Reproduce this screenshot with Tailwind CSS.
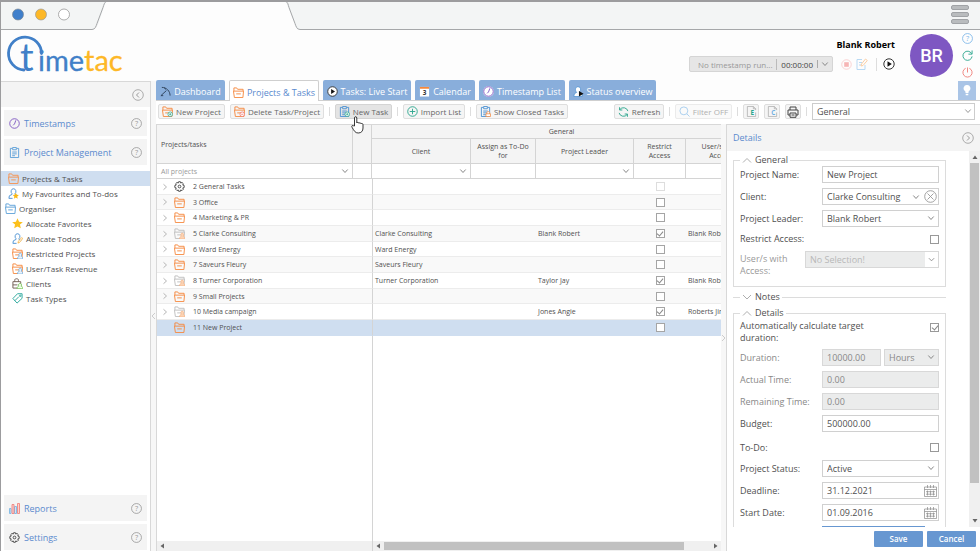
<!DOCTYPE html>
<html lang="en">
<head>
<meta charset="utf-8">
<title>TimeTac – Projects &amp; Tasks</title>
<script src="https://cdn.jsdelivr.net/npm/@tailwindcss/browser@4"></script>
</head>
<body class="h-screen overflow-hidden bg-[#fdfdfd] font-['Open_Sans',sans-serif] text-[8px] leading-[11px] text-[#666]">

<svg class="hidden" aria-hidden="true">
  <symbol id="folder" viewBox="0 0 12 12"><g fill="none" stroke="currentColor" stroke-width="1"><path d="M1 4.500V1h3l1 1.500h6v2M.5 4.500h11L10.800 11.500H1.500zM3.500 7.500h5"/></g></symbol>
  <symbol id="clip" viewBox="0 0 12 12"><g fill="none" stroke="currentColor"><path d="M3.500 1.500h-2v10h9v-10h-2" /><path d="M4 .5h4v2.500H4zM3.500 5.500h5M3.500 7.500h5M3.500 9.500h3"/></g></symbol>
  <symbol id="clock" viewBox="0 0 12 12"><g fill="none" stroke="currentColor"><circle cx="6" cy="6" r="5.200"/><path d="M7.500 2.500 6 6.500 4.500 8"/></g></symbol>
  <symbol id="help" viewBox="0 0 12 12"><circle cx="6" cy="6" r="5.400" fill="none" stroke="currentColor" stroke-width=".9"/><text x="6" y="8.800" font-size="8" text-anchor="middle" fill="currentColor">?</text></symbol>
  <symbol id="gear" viewBox="0 0 12 12"><g fill="none" stroke="currentColor"><path d="M5 .8h2l.4 1.500 1.300-.8 1.600 1.600-.8 1.300 1.600.5v2.200l-1.600.5.8 1.300-1.600 1.600-1.300-.8L7 11.200H5l-.4-1.500-1.300.8-1.600-1.600.8-1.300L.9 7.100V4.900l1.600-.5-.8-1.300 1.600-1.600 1.300.8z"/><circle cx="6" cy="6" r="1.500"/></g></symbol>
  <symbol id="person" viewBox="0 0 12 12"><g fill="none" stroke="currentColor"><path d="M6 .8a2.600 3 0 0 1 1.600 5.400V7L10 8.200M6 .8a2.600 3 0 0 0-1.600 5.400V7L1.500 8.500 1 11.300h4"/></g></symbol>
  <symbol id="star" viewBox="0 0 12 12"><path fill="currentColor" d="m6 .3 1.700 3.800 4.100.4-3.100 2.700.9 4.100L6 9.200l-3.600 2.100.9-4.100L.2 4.500l4.100-.4z"/></symbol>
  <symbol id="down" viewBox="0 0 8 8"><path d="m1.300 2.500 2.700 3 2.700-3" fill="none" stroke="currentColor"/></symbol>
  <symbol id="right" viewBox="0 0 8 8"><path d="m2.500 1.300 3 2.700-3 2.700" fill="none" stroke="currentColor"/></symbol>
  <symbol id="up" viewBox="0 0 10 8"><path d="m1 6.500 4-4 4 4" fill="none" stroke="currentColor" stroke-width=".8"/></symbol>
  <symbol id="refresh" viewBox="0 0 12 12"><path d="M10.800 5A5 5 0 0 0 2 3.300M1.200 7A5 5 0 0 0 10 8.700M1.700.8v3h3M10.300 11.200v-3h-3" fill="none" stroke="currentColor"/></symbol>
  <symbol id="play" viewBox="0 0 12 12"><circle cx="6" cy="6" r="5.200" fill="#fff" stroke="#333"/><path d="M4.500 3.300 8.800 6 4.500 8.700z" fill="#111"/></symbol>
  <symbol id="cal" viewBox="0 0 13 12"><g fill="none" stroke="currentColor" stroke-width=".7"><path d="M.5 2h12v9.500H.5zM.5 4.500h12M3.500 0v3M9.500 0v3M6.500 0v3M2 6.700h9M2 9.200h9M3.500 5.500v5M6.500 5.500v5M9.500 5.500v5"/></g></symbol>
  <symbol id="page" viewBox="0 0 12 12"><path d="M10.500 7v4.500h-9V.5H8l2.500 2.500v1.500M8 .5V3h2.500" fill="none" stroke="#aaa" stroke-width=".8"/></symbol>
</svg>

<div class="flex h-full flex-col border-l border-t-2 border-[#9c9c9e]">

  <!-- Window frame -->
  <div class="flex h-[28px] shrink-0 bg-[#f3f5f5]">
    <svg class="h-[28px] w-[300px] shrink-0" viewBox="0 0 300 28" aria-hidden="true">
      <path d="M92 28C95 27 97 23 98 20l5-15c.8-3 1.500-4 3-5h178c2 1 2 3 3 5l6 15c2 5 2 8 5 8z" fill="#fdfdfd"/>
      <path d="M0 27.500h91c3 0 4-3 5-6l6-16c1-3 1.500-5 3-6M285-.5c2 1 2 3 3 6l6 16c1 3 2 6 5 6h1" fill="none" stroke="#a5a7a9"/>
      <circle cx="17" cy="12.500" r="5.500" fill="#3f7fcb" stroke="#7d8894" stroke-width=".7"/>
      <circle cx="40" cy="12.500" r="5.500" fill="#fdb827" stroke="#999" stroke-width=".7"/>
      <circle cx="63" cy="12.500" r="5.500" fill="#fff" stroke="#999" stroke-width=".8"/>
    </svg>
    <div class="flex flex-1 justify-end border-b border-[#a5a7a9] pr-[11px] pt-[3px]">
      <button aria-label="Menu" class="flex h-[19px] w-[18px] flex-col justify-between">
        <span class="block h-[5px] w-full rounded-[2px] border border-[#a0a3a6] bg-[#b9bcbe]"></span>
        <span class="block h-[5px] w-full rounded-[2px] border border-[#a0a3a6] bg-[#b9bcbe]"></span>
        <span class="block h-[5px] w-full rounded-[2px] border border-[#a0a3a6] bg-[#b9bcbe]"></span>
      </button>
    </div>
  </div>

  <!-- Header -->
  <header class="flex h-[51px] shrink-0 justify-between">
    <svg class="h-[46px] w-[130px] overflow-visible" viewBox="0 0 130 46" role="img" aria-label="timetac">
      <path d="M23 40A16.500 16.500 0 1 1 40.500 23.500" fill="none" stroke="#4180c8" stroke-width="2.800" stroke-linecap="round"/>
      <g font-family="Lato">
        <text x="19" y="41" font-size="38" fill="#4180c8">t</text>
        <text x="37" y="41" font-size="29" fill="#4180c8" stroke="#4180c8" stroke-width=".3">ime<tspan fill="#fdb827" stroke="#fdb827">tac</tspan></text>
      </g>
    </svg>
    <div class="flex items-start">
      <div class="flex flex-col items-end pt-[9px]">
        <span class="text-[9px] leading-[12px] font-bold text-black">Blank Robert</span>
        <div class="mt-[5px] flex items-center">
          <div class="flex h-[16px] w-[144px] items-center rounded-[2px] border border-[#d5d5d5] bg-[#e6e6e6] whitespace-nowrap">
            <span class="flex-1 pl-[8px] text-[#999]">No timestamp run...</span>
            <span class="border-l border-[#bbb] px-[4px] text-[#444]">00:00:00</span>
            <button aria-label="Choose timer" class="border-l border-[#aaa] px-[3px] text-[#888]"><svg class="h-[8px] w-[8px]"><use href="#down"/></svg></button>
          </div>
          <button aria-label="Stop" class="ml-[8px]"><svg class="h-[11px] w-[11px]" viewBox="0 0 12 12"><circle cx="6" cy="6" r="5.200" fill="none" stroke="#f9cfcf"/><rect x="3.500" y="3.500" width="5" height="5" fill="#f7b5b5"/></svg></button>
          <button aria-label="Edit" class="ml-[4px]"><svg class="h-[12px] w-[12px]" viewBox="0 0 12 12" fill="none"><path d="M6 1.500H1v10h8V7M3 4.500h3M3 7h2" stroke="#b9d9f3"/><path d="m5 8 .5-2L9.500 1l1.800 1.500L7 7.500z" stroke="#fbcfa5"/></svg></button>
          <span class="ml-[8px] mr-[6px] h-[13px] w-px bg-[#ddd]"></span>
          <button aria-label="Start"><svg class="h-[12px] w-[12px]"><use href="#play"/></svg></button>
        </div>
      </div>
      <div class="ml-[15px] mt-[4px] flex h-[43px] w-[43px] items-center justify-center rounded-full bg-[#7e57c2] font-['Roboto',sans-serif] text-[18px] font-medium text-white">BR</div>
      <div class="ml-[5px] mr-[4px] flex w-[18px] flex-col items-center gap-[6px] pt-[3px]">
        <button aria-label="Help" class="h-[11px] text-[#7ab5e8]"><svg class="h-[11px] w-[11px]"><use href="#help"/></svg></button>
        <button aria-label="Reload" class="h-[11px] text-[#2aa58c]"><svg class="h-[11px] w-[11px]" viewBox="0 0 12 12"><path d="M10.500 4A5 5 0 1 0 11 7M11 .5v4H7" fill="none" stroke="currentColor"/></svg></button>
        <button aria-label="Log out" class="h-[11px] text-[#ef7f78]"><svg class="h-[11px] w-[11px]" viewBox="0 0 12 12"><path d="M4 1.400a5 5 0 1 0 4 0M6 .5v5.500" fill="none" stroke="currentColor"/></svg></button>
      </div>
    </div>
  </header>

  <div class="flex min-h-0 flex-1">
    <!-- Navigation -->
    <nav class="flex w-[150px] shrink-0 flex-col border-r border-t border-[#d8d8d8] bg-white">
      <div class="flex h-[25px] items-center justify-end bg-[#f4f4f4] pr-[6px]">
        <button aria-label="Collapse navigation" class="text-[#999]"><svg class="h-[12px] w-[12px]" viewBox="0 0 12 12"><path d="M7 3.500 4.500 6 7 8.500" fill="none" stroke="currentColor"/><circle cx="6" cy="6" r="5.300" fill="none" stroke="currentColor" stroke-width=".8"/></svg></button>
      </div>
      <div class="flex flex-col gap-[3px] px-[3px] pt-[3px] text-[9px] text-[#5a8ace]">
        <a href="#" class="flex h-[26px] items-center bg-[#f4f4f4] px-[5px]"><svg class="mr-[4px] h-[11px] w-[11px] text-[#7e57c2]"><use href="#clock"/></svg><span class="flex-1">Timestamps</span><svg class="h-[11px] w-[11px] text-[#999]"><use href="#help"/></svg></a>
        <a href="#" class="flex h-[26px] items-center bg-[#f4f4f4] px-[5px]"><svg class="mr-[4px] h-[11px] w-[11px] text-[#5b9fd8]"><use href="#clip"/></svg><span class="flex-1">Project Management</span><svg class="h-[11px] w-[11px] text-[#999]"><use href="#help"/></svg></a>
      </div>
      <ul class="mt-[6px] flex-1 text-[8px] text-[#505050]">
        <li><a href="#" class="flex h-[15px] items-center gap-[3px] bg-[#cfdef0] pl-[7px]"><svg class="h-[11px] w-[11px] text-[#f5924e]"><use href="#folder"/></svg>Projects &amp; Tasks</a></li>
        <li><a href="#" class="flex h-[15px] items-center gap-[3px] pl-[7px]"><svg class="h-[11px] w-[11px]" viewBox="0 0 12 12"><use href="#person" class="text-[#4a90d2]"/><svg x="5" y="5" width="7" height="7" class="text-[#fcb913]"><use href="#star"/></svg></svg>My Favourites and To-dos</a></li>
        <li><a href="#" class="flex h-[15px] items-center gap-[3px] pl-[4px]"><svg class="h-[11px] w-[11px] text-[#5ba0d8]"><use href="#folder"/></svg>Organiser</a></li>
        <li><a href="#" class="flex h-[15px] items-center gap-[3px] pl-[11px]"><svg class="h-[11px] w-[11px] text-[#fcc01c]"><use href="#star"/></svg>Allocate Favorites</a></li>
        <li><a href="#" class="flex h-[15px] items-center gap-[3px] pl-[11px]"><svg class="h-[11px] w-[11px]" viewBox="0 0 12 12"><use href="#person" class="text-[#4a90d2]"/><path d="M6.500 11 7 9l3.500-4 1.200 1-3.500 4.300z" fill="#fff" stroke="#f5a623" stroke-width=".8"/></svg>Allocate Todos</a></li>
        <li><a href="#" class="flex h-[15px] items-center gap-[3px] pl-[11px]"><svg class="h-[11px] w-[11px]" viewBox="0 0 12 12"><use href="#folder" class="text-[#f5883d]"/><path d="M6 12c0-2 1-3 2-3-1.500-2 0-3.500 1-3.500s2.500 1.500 1 3.500c1 0 2 1 2 3z" fill="#e8f3fc" stroke="#5ba0d8" stroke-width=".7"/></svg>Restricted Projects</a></li>
        <li><a href="#" class="flex h-[15px] items-center gap-[3px] pl-[11px]"><svg class="h-[11px] w-[11px]" viewBox="0 0 12 12"><use href="#folder" class="text-[#f5883d]"/><path d="M6 12c0-2 1-3 2-3-1.500-2 0-3.500 1-3.500s2.500 1.500 1 3.500c1 0 2 1 2 3z" fill="#e8f3fc" stroke="#5ba0d8" stroke-width=".7"/></svg>User/Task Revenue</a></li>
        <li><a href="#" class="flex h-[15px] items-center gap-[3px] pl-[11px]"><svg class="h-[11px] w-[11px]" viewBox="0 0 12 12" fill="none"><path d="M1 4h8.500v7H1zM3 4V2.500C3 1 4 .8 5 .8S7 1 7 2.500V4M1 7.500h5" stroke="#6d5a50"/><path d="M5.500 11.700c0-2 1-2.700 2-2.700-1.200-2 0-3 1.200-3s2.400 1 1.200 3c1 0 2 .7 2 2.700z" fill="#efffe8" stroke="#6cbf4b" stroke-width=".8"/></svg>Clients</a></li>
        <li><a href="#" class="flex h-[15px] items-center gap-[3px] pl-[11px]"><svg class="h-[11px] w-[11px]" viewBox="0 0 12 12" fill="none" stroke="#26a69a"><path d="M6 .8h5v5L5.500 11 1 6zM3 8.500 7.500 4"/><circle cx="9" cy="3" r=".8"/></svg>Task Types</a></li>
      </ul>
      <div class="flex flex-col gap-[3px] px-[3px] pb-px text-[9px] text-[#5a8ace]">
        <a href="#" class="flex h-[26px] items-center bg-[#f4f4f4] px-[5px]"><svg class="mr-[4px] h-[11px] w-[11px]" viewBox="0 0 11 11"><path d="M.5 5.500h1.500v5H.5zM5.500 3.500h2v7h-2z" fill="#cfe5f6" stroke="#6fb0e2" stroke-width=".8"/><path d="M3 1.500h2v9H3zM8.500.5h2v10h-2z" fill="#fbd3d0" stroke="#f07a73" stroke-width=".8"/></svg><span class="flex-1">Reports</span><svg class="h-[11px] w-[11px] text-[#999]"><use href="#help"/></svg></a>
        <a href="#" class="flex h-[26px] items-center bg-[#f4f4f4] px-[5px]"><svg class="mr-[4px] h-[11px] w-[11px] text-[#444]"><use href="#gear"/></svg><span class="flex-1">Settings</span><svg class="h-[11px] w-[11px] text-[#999]"><use href="#help"/></svg></a>
      </div>
    </nav>
    <div class="flex w-[5px] shrink-0 items-center bg-[#f7f7f7] text-[#ccc]"><svg class="h-[8px] w-[5px]" viewBox="0 0 5 8"><path d="M4 1 1 4l3 3" fill="none" stroke="currentColor"/></svg></div>

    <main class="flex min-w-0 flex-1 flex-col">
      <!-- Tabs -->
      <div class="flex h-[20px] shrink-0 items-end justify-between border-b border-[#cfcfcf] pr-[4px]">
        <div class="flex h-[20px] gap-[4px] text-[9px] whitespace-nowrap text-white" role="tablist">
          <button role="tab" class="flex w-[69px] items-center justify-center gap-[3px] rounded-t-[2px] bg-[#89aedb] pt-[2px]"><svg class="h-[11px] w-[11px]" viewBox="0 0 12 12" fill="none" stroke="#2d4058"><path d="M2 1.500c5 0 9 4 9 9M1 10.500 7 5M1 10.500h2.500M5 1.800l1 2"/></svg>Dashboard</button>
          <button role="tab" aria-selected="true" class="z-10 -mb-px flex w-[90px] items-center justify-center gap-[3px] rounded-t-[2px] border border-b-0 border-[#cfcfcf] bg-white pt-[2px] text-[#5a8ace]"><svg class="h-[11px] w-[11px] text-[#f5883d]"><use href="#folder"/></svg>Projects &amp; Tasks</button>
          <button role="tab" class="flex w-[88px] items-center justify-center gap-[3px] rounded-t-[2px] bg-[#89aedb] pt-[2px]"><svg class="h-[11px] w-[11px]"><use href="#play"/></svg>Tasks: Live Start</button>
          <button role="tab" class="flex w-[60px] items-center justify-center gap-[3px] rounded-t-[2px] bg-[#89aedb] pt-[2px]"><svg class="h-[11px] w-[11px]" viewBox="0 0 12 12"><path d="M1 1h10v10.500H1z" fill="#fff"/><path d="M1 1h10v2H1z" fill="#f5883d"/><text x="6" y="10" font-size="7" font-weight="700" text-anchor="middle" fill="#333">3</text></svg>Calendar</button>
          <button role="tab" class="flex w-[86px] items-center justify-center gap-[3px] rounded-t-[2px] bg-[#89aedb] pt-[2px]"><svg class="h-[11px] w-[11px] text-[#7e57c2]" viewBox="0 0 12 12"><circle cx="6" cy="6" r="5.900" fill="#fff"/><use href="#clock"/></svg>Timestamp List</button>
          <button role="tab" class="flex w-[87px] items-center justify-center gap-[3px] rounded-t-[2px] bg-[#89aedb] pt-[2px]"><svg class="h-[11px] w-[11px]" viewBox="0 0 12 12"><path d="M5.500.8a2.800 3 0 0 1 1.600 5.500L10 8.500v3H1c0-3 1-3.500 3-4.500C1.500 4 3 .8 5.500.8z" fill="#fff" stroke="#4a90d2" stroke-width=".8"/><path d="m6.500 5.500 5 3-5 3z" fill="#111"/></svg>Status overview</button>
        </div>
        <button aria-label="Tips" class="flex h-[19px] w-[18px] items-center justify-center bg-[#a9c4e6]"><svg class="h-[11px] w-[8px]" viewBox="0 0 8 11"><path d="M4 0a3.300 3.300 0 0 1 2 6c-.5.5-.5 1-.5 2h-3c0-1 0-1.500-.5-2a3.300 3.300 0 0 1 2-6zM2.700 8.700h2.600v1.500H2.700z" fill="#fff"/></svg></button>
      </div>

      <!-- Toolbar -->
      <div class="flex h-[23px] shrink-0 items-center gap-[5px] bg-white pb-[2px] pl-[2px] pr-[5px] whitespace-nowrap text-[#666]">
        <button class="flex h-[15px] w-[67px] items-center justify-center gap-[3px] rounded-[2px] border border-[#dedede] bg-[#f5f5f5]"><svg class="h-[11px] w-[11px]" viewBox="0 0 12 12"><use href="#folder" class="text-[#f5883d]"/><circle cx="9" cy="9" r="2.500" fill="#fff" stroke="#2aa58c" stroke-width=".8"/><path d="M9 7.800v2.400M7.800 9h2.400" stroke="#2aa58c" stroke-width=".8"/></svg>New Project</button>
        <button class="flex h-[15px] w-[94px] items-center justify-center gap-[3px] rounded-[2px] border border-[#dedede] bg-[#f5f5f5]"><svg class="h-[11px] w-[11px]" viewBox="0 0 12 12"><use href="#folder" class="text-[#f5883d]"/><circle cx="9" cy="9" r="2.500" fill="#fff" stroke="#ef6c66" stroke-width=".8"/><path d="M7.800 9h2.400" stroke="#ef6c66" stroke-width=".8"/></svg>Delete Task/Project</button>
        <span class="h-[9px] w-px bg-[#ddd]"></span>
        <button class="flex h-[15px] w-[57px] items-center justify-center gap-[3px] rounded-[2px] border border-[#d4d4d4] bg-[#e4e4e4]"><svg class="h-[11px] w-[11px]" viewBox="0 0 12 12"><use href="#clip" class="text-[#4a90d2]"/><circle cx="9" cy="9" r="2.500" fill="#fff" stroke="#2aa58c" stroke-width=".8"/><path d="M9 7.800v2.400M7.800 9h2.400" stroke="#2aa58c" stroke-width=".8"/></svg>New Task</button>
        <span class="h-[9px] w-px bg-[#ddd]"></span>
        <button class="flex h-[15px] w-[62px] items-center justify-center gap-[3px] rounded-[2px] border border-[#dedede] bg-[#f5f5f5]"><svg class="h-[11px] w-[11px]" viewBox="0 0 12 12" fill="none" stroke="#2aa58c"><circle cx="6" cy="6" r="5.200"/><path d="M6 3v6M3 6h6"/></svg>Import List</button>
        <span class="h-[9px] w-px bg-[#ddd]"></span>
        <button class="flex h-[15px] w-[92px] items-center justify-center gap-[3px] rounded-[2px] border border-[#dedede] bg-[#f5f5f5]"><svg class="h-[11px] w-[11px]" viewBox="0 0 12 12"><use href="#clip" class="text-[#4a90d2]"/><path d="M6.500 8.500h5v3h-5zM7.500 8.500V7.200c0-1.500 3-1.500 3 0v1.300" fill="#fff" stroke="#f5883d" stroke-width=".8"/></svg>Show Closed Tasks</button>
        <span class="flex-1"></span>
        <button class="flex h-[15px] w-[50px] items-center justify-center gap-[3px] rounded-[2px] border border-[#dedede] bg-[#f5f5f5]"><svg class="h-[12px] w-[11px] text-[#2aa58c]"><use href="#refresh"/></svg>Refresh</button>
        <span class="h-[9px] w-px bg-[#ddd]"></span>
        <button disabled class="flex h-[15px] w-[57px] items-center justify-center gap-[3px] rounded-[2px] border border-[#ebebeb] bg-[#fafafa] text-[#b0b0b0]"><svg class="h-[11px] w-[11px]" viewBox="0 0 12 12" fill="none" stroke="#a5cdee"><circle cx="5.300" cy="5.300" r="4.300"/><path d="m8.500 8.500 3 3"/></svg>Filter OFF</button>
        <span class="h-[9px] w-px bg-[#ddd]"></span>
        <button aria-label="Export Excel" class="flex h-[15px] w-[16px] items-center justify-center rounded-[2px] border border-[#dedede] bg-[#f5f5f5]"><svg class="h-[11px] w-[11px]" viewBox="0 0 12 12"><use href="#page"/><text x="7" y="10" font-size="7" font-weight="700" text-anchor="middle" fill="#2aa58c">E</text></svg></button>
        <button aria-label="Export CSV" class="flex h-[15px] w-[16px] items-center justify-center rounded-[2px] border border-[#dedede] bg-[#f5f5f5]"><svg class="h-[11px] w-[11px]" viewBox="0 0 12 12"><use href="#page"/><text x="7" y="10" font-size="7" font-weight="700" text-anchor="middle" fill="#6fb0e2">C</text></svg></button>
        <button aria-label="Print" class="flex h-[15px] w-[16px] items-center justify-center rounded-[2px] border border-[#dedede] bg-[#f5f5f5]"><svg class="h-[12px] w-[12px]" viewBox="0 0 12 12" fill="none" stroke="#444"><path d="M3 4V1h6v3M3 9H1V4h10v5H9M3 7h6v4.300H3zM4.500 9h3"/></svg></button>
        <span class="h-[9px] w-px bg-[#ddd]"></span>
        <label class="relative block w-[163px]"><span class="sr-only">View</span>
          <select class="block h-[17px] w-full appearance-none border border-[#ccc] bg-white pl-[4px] text-[9px] leading-[15px] text-[#505050]"><option>General</option></select>
          <svg class="pointer-events-none absolute right-[3px] top-[4px] h-[8px] w-[8px] text-[#999]"><use href="#down"/></svg>
        </label>
      </div>

      <div class="flex min-h-0 flex-1">
        <!-- Project grid -->
        <section class="flex min-w-0 flex-1 flex-col border-l border-t border-[#d8d8d8] bg-white">
          <div class="min-h-0 flex-1 overflow-hidden">
            <table class="h-full w-[597px] table-fixed border-separate border-spacing-0 text-left text-[7px] leading-[9px] text-[#505050]">
              <colgroup><col class="w-[195px]"><col class="w-[20px]"><col class="w-[99px]"><col class="w-[65px]"><col class="w-[98px]"><col class="w-[52px]"><col class="w-[68px]"></colgroup>
              <thead class="bg-[#f4f4f4] text-center">
                <tr class="h-[14px]">
                  <th rowspan="2" class="border-b border-[#d4d4d4] pl-[4px] text-left font-normal">Projects/tasks</th>
                  <th rowspan="2" class="border-b border-l border-r border-[#d4d4d4]"></th>
                  <th colspan="4" class="border-b border-[#d4d4d4] pl-[65px] font-normal">General</th>
                  <th class="border-b border-[#d4d4d4]"></th>
                </tr>
                <tr class="h-[25px]">
                  <th class="border-b border-r border-[#d4d4d4] font-normal">Client</th>
                  <th class="border-b border-r border-[#d4d4d4] px-[4px] font-normal">Assign as To-Do for</th>
                  <th class="border-b border-r border-[#d4d4d4] font-normal">Project Leader</th>
                  <th class="border-b border-r border-[#d4d4d4] font-normal">Restrict<br>Access</th>
                  <th class="border-b border-[#d4d4d4] font-normal">User/s with<br>Access</th>
                </tr>
                <tr class="h-[15px] bg-white text-[#888]">
                  <td class="border-b border-[#d4d4d4] text-left text-[#999]"><div class="flex items-center justify-between pl-[4px] pr-[3px]">All projects<svg class="h-[8px] w-[8px] text-[#888]"><use href="#down"/></svg></div></td>
                  <td class="border-b border-l border-r border-[#d4d4d4]"></td>
                  <td class="border-b border-r border-[#d4d4d4]"><svg class="ml-auto mr-[3px] h-[8px] w-[8px]"><use href="#down"/></svg></td>
                  <td class="border-b border-r border-[#d4d4d4]"></td>
                  <td class="border-b border-r border-[#d4d4d4]"><svg class="ml-auto mr-[3px] h-[8px] w-[8px]"><use href="#down"/></svg></td>
                  <td class="border-b border-r border-[#d4d4d4]"></td>
                  <td class="border-b border-[#d4d4d4]"></td>
                </tr>
              </thead>
              <tbody id="rows"></tbody>
            </table>
          </div>
          <div class="flex h-[10px] shrink-0 bg-[#f0f0f0] text-[#666]">
            <div class="flex w-[216px] shrink-0 items-center border-r border-[#d4d4d4] pl-[3px]"><svg class="h-[6px] w-[4px]" viewBox="0 0 4 6"><path d="M4 .5v5L.5 3z" fill="currentColor"/></svg></div>
            <div class="flex min-w-0 flex-1 items-center gap-[4px] px-[3px]"><svg class="h-[6px] w-[4px] shrink-0" viewBox="0 0 4 6"><path d="M4 .5v5L.5 3z" fill="currentColor"/></svg>
              <div class="flex-1"><div class="h-[8px] w-[92%] bg-[#c1c1c1]"></div></div>
              <svg class="h-[6px] w-[4px] shrink-0" viewBox="0 0 4 6"><path d="M0 .5v5L3.500 3z" fill="currentColor"/></svg></div>
          </div>
        </section>
        <div class="flex w-[5px] shrink-0 items-center bg-[#f7f7f7] text-[#ccc]"><svg class="h-[8px] w-[5px]" viewBox="0 0 5 8"><path d="m1 1 3 3-3 3" fill="none" stroke="currentColor"/></svg></div>

        <!-- Details -->
        <aside class="flex w-[254px] shrink-0 flex-col border-l border-t border-[#d8d8d8] bg-white text-[9px] leading-[12px] text-[#505050]">
          <div class="flex h-[26px] shrink-0 items-center justify-between bg-[#f4f4f4] pl-[6px] pr-[6px]">
            <h2 class="text-[9px] text-[#5a8ace]">Details</h2>
            <button aria-label="Collapse details" class="text-[#999]"><svg class="h-[12px] w-[12px]" viewBox="0 0 12 12"><path d="M5 3.500 7.500 6 5 8.500" fill="none" stroke="currentColor"/><circle cx="6" cy="6" r="5.300" fill="none" stroke="currentColor" stroke-width=".8"/></svg></button>
          </div>
          <div class="flex min-h-0 flex-1">
            <form class="min-w-0 flex-1 overflow-hidden pl-[6px] pr-[23px] pt-[3px]">
              <fieldset class="h-[133px] border border-[#dcdcdc] px-[6px]">
                <legend class="flex h-[12px] items-center gap-[3px] px-[2px] text-[9px]"><svg class="h-[8px] w-[10px] text-[#999]"><use href="#up"/></svg>General</legend>
                <div class="flex flex-col gap-[5px]">
                  <div class="flex h-[17px] items-center"><label for="pn" class="w-[82px] shrink-0">Project Name:</label><input id="pn" value="New Project" class="h-full w-0 flex-1 border border-[#d0d0d0] px-[4px]"></div>
                  <div class="flex h-[17px] items-center"><label for="cl" class="w-[82px] shrink-0">Client:</label>
                    <div class="flex h-full min-w-0 flex-1 items-center border border-[#d0d0d0] pr-px"><span class="relative block flex-1"><select id="cl" class="block h-[15px] w-full appearance-none px-[4px] leading-[15px]"><option>Clarke Consulting</option></select><svg class="pointer-events-none absolute right-[4px] top-[4px] h-[8px] w-[8px] text-[#888]"><use href="#down"/></svg></span>
                    <button type="button" aria-label="Clear client" class="text-[#999]"><svg class="h-[13px] w-[13px]" viewBox="0 0 13 13" fill="none" stroke="currentColor" stroke-width=".9"><circle cx="6.500" cy="6.500" r="5.800"/><path d="m3.500 3.500 6 6M9.500 3.500l-6 6"/></svg></button></div></div>
                  <div class="flex h-[17px] items-center"><label for="pl" class="w-[82px] shrink-0">Project Leader:</label><span class="relative block min-w-0 flex-1"><select id="pl" class="block h-[17px] w-full appearance-none border border-[#d0d0d0] px-[4px] leading-[15px]"><option>Blank Robert</option></select><svg class="pointer-events-none absolute right-[4px] top-[4px] h-[8px] w-[8px] text-[#888]"><use href="#down"/></svg></span></div>
                  <div class="flex h-[14px] items-center justify-between"><label for="ra">Restrict Access:</label><input id="ra" type="checkbox" class="h-[9px] w-[9px] appearance-none border border-[#999]"></div>
                  <div class="flex items-start text-[#999]"><label for="ua" class="w-[65px] shrink-0 pt-[2px]">User/s with<br>Access:</label><span class="relative block min-w-0 flex-1"><select id="ua" disabled class="block h-[17px] w-full appearance-none border border-[#d8d8d8] bg-[#ebecec] px-[4px] leading-[15px] text-[#b8b8b8] opacity-100"><option>No Selection!</option></select><svg class="pointer-events-none absolute right-px top-px h-[15px] w-[13px] bg-white p-[3px] text-[#888]" viewBox="0 0 8 8"><path d="m1 2.500 3 3 3-3" fill="none" stroke="currentColor"/></svg></span></div>
                </div>
              </fieldset>
              <fieldset class="mt-[4px] border-t border-[#dcdcdc] px-[7px]">
                <legend class="flex h-[12px] items-center gap-[3px] px-[2px] text-[9px]"><svg class="h-[8px] w-[10px] text-[#999]" viewBox="0 0 10 8"><path d="m1 2 4 4 4-4" fill="none" stroke="currentColor" stroke-width=".8"/></svg>Notes</legend>
              </fieldset>
              <fieldset class="mt-[4px] h-[260px] border border-[#dcdcdc] px-[6px]">
                <legend class="flex h-[12px] items-center gap-[3px] px-[2px] text-[9px]"><svg class="h-[8px] w-[10px] text-[#999]"><use href="#up"/></svg>Details</legend>
                <div class="flex flex-col gap-[5px] pt-px">
                  <div class="flex h-[24px] items-start justify-between"><label for="ac" class="w-[130px]">Automatically calculate target duration:</label><input id="ac" type="checkbox" checked class="mt-[3px] flex h-[9px] w-[9px] appearance-none justify-center border border-[#999] checked:after:block checked:after:h-[6px] checked:after:w-[4px] checked:after:rotate-40 checked:after:border-b checked:after:border-r checked:after:border-[#888] checked:after:content-['']"></div>
                  <div class="flex h-[17px] items-center text-[#888]"><label for="du" class="w-[82px] shrink-0">Duration:</label><input id="du" disabled value="10000.00" class="h-full w-[59px] border border-[#d8d8d8] bg-[#ebecec] px-[4px]"><span class="relative ml-[3px] block min-w-0 flex-1"><select disabled aria-label="Duration unit" class="block h-[17px] w-full appearance-none border border-[#d8d8d8] bg-[#ebecec] px-[4px] leading-[15px] opacity-100"><option>Hours</option></select><svg class="pointer-events-none absolute right-[4px] top-[4px] h-[8px] w-[8px]"><use href="#down"/></svg></span></div>
                  <div class="flex h-[17px] items-center text-[#888]"><label for="at" class="w-[82px] shrink-0">Actual Time:</label><input id="at" disabled value="0.00" class="h-full w-0 flex-1 border border-[#d8d8d8] bg-[#ebecec] px-[4px]"></div>
                  <div class="flex h-[17px] items-center text-[#888]"><label for="rt" class="w-[82px] shrink-0">Remaining Time:</label><input id="rt" disabled value="0.00" class="h-full w-0 flex-1 border border-[#d8d8d8] bg-[#ebecec] px-[4px]"></div>
                  <div class="flex h-[17px] items-center"><label for="bu" class="w-[82px] shrink-0">Budget:</label><input id="bu" value="500000.00" class="h-full w-0 flex-1 border border-[#d0d0d0] px-[4px]"></div>
                  <div class="mt-[3px] flex h-[15px] items-center justify-between"><label for="td">To-Do:</label><input id="td" type="checkbox" class="h-[9px] w-[9px] appearance-none border border-[#999]"></div>
                  <div class="flex h-[17px] items-center"><label for="ps" class="w-[82px] shrink-0">Project Status:</label><span class="relative block min-w-0 flex-1"><select id="ps" class="block h-[17px] w-full appearance-none border border-[#d0d0d0] px-[4px] leading-[15px]"><option>Active</option></select><svg class="pointer-events-none absolute right-[4px] top-[4px] h-[8px] w-[8px] text-[#888]"><use href="#down"/></svg></span></div>
                  <div class="flex h-[17px] items-center"><label for="dl" class="w-[82px] shrink-0">Deadline:</label><div class="flex h-full min-w-0 flex-1 items-center border border-[#d0d0d0] pr-px"><input id="dl" value="31.12.2021" class="w-0 flex-1 px-[4px]"><button type="button" aria-label="Pick deadline" class="text-[#888]"><svg class="h-[12px] w-[13px]"><use href="#cal"/></svg></button></div></div>
                  <div class="flex h-[17px] items-center"><label for="sd" class="w-[82px] shrink-0">Start Date:</label><div class="flex h-full min-w-0 flex-1 items-center border border-[#d0d0d0] pr-px"><input id="sd" value="01.09.2016" class="w-0 flex-1 px-[4px]"><button type="button" aria-label="Pick start date" class="text-[#888]"><svg class="h-[12px] w-[13px]"><use href="#cal"/></svg></button></div></div>
                  <div class="ml-[82px] mr-[14px] h-[17px] bg-[#6797d1]"></div>
                </div>
              </fieldset>
            </form>
            <div class="flex w-[11px] shrink-0 flex-col items-center bg-[#f0f0f0] text-[#666]">
              <svg class="my-[4px] h-[4px] w-[6px] shrink-0" viewBox="0 0 6 4"><path d="M.5 4h5L3 .5z" fill="currentColor"/></svg>
              <div class="min-h-0 w-[9px] flex-1"><div class="h-[91%] bg-[#c1c1c1]"></div></div>
              <svg class="my-[4px] h-[4px] w-[6px] shrink-0" viewBox="0 0 6 4"><path d="M.5 0h5L3 3.500z" fill="currentColor"/></svg>
            </div>
          </div>
          <div class="flex h-[24px] shrink-0 items-start justify-end gap-[4px] pr-[4px] pt-[4px] text-[8px] font-semibold text-white">
            <button class="h-[16px] w-[49px] rounded-[1px] bg-[#6797d1]">Save</button>
            <button class="h-[16px] w-[49px] rounded-[1px] bg-[#6797d1]">Cancel</button>
          </div>
        </aside>
      </div>
    </main>
  </div>
</div>

<!-- Mouse pointer -->
<svg class="pointer-events-none absolute left-[351px] top-[116px] h-[18px] w-[13px]" viewBox="0 0 13 18" aria-hidden="true"><path d="M3.500 10V2c0-1.800 2.300-1.800 2.300 0v5c.3-1 2-.8 2.100.3.400-.8 2-.6 2.100.5.600-.7 2-.4 2 .9V12c0 3-1.600 5-4.800 5-3 0-4-2-6.200-5.800-.8-1.400.7-2.300 1.600-1.400z" fill="#fff" stroke="#222" stroke-width=".9"/></svg>

<script>
const rows = [
  { n: '2 General Tasks', icon: 'gear', off: true },
  { n: '3 Office' },
  { n: '4 Marketing & PR' },
  { n: '5 Clarke Consulting', c: 'Clarke Consulting', l: 'Blank Robert', u: 'Blank Robert', on: true },
  { n: '6 Ward Energy', c: 'Ward Energy' },
  { n: '7 Saveurs Fleury', c: 'Saveurs Fleury' },
  { n: '8 Turner Corporation', c: 'Turner Corporation', l: 'Taylor Jay', u: 'Blank Robert', on: true },
  { n: '9 Small Projects' },
  { n: '10 Media campaign', l: 'Jones Angie', u: 'Roberts Jim', on: true },
  { n: '11 New Project', sel: true },
];
const icon = r => r.icon === 'gear'
  ? '<svg class="h-[11px] w-[11px] text-[#444]"><use href="#gear"/></svg>'
  : r.on
  ? '<svg class="h-[11px] w-[11px]" viewBox="0 0 12 12"><use href="#folder" class="text-[#bdbdbd]"/><path d="M6 12c0-2 1-3 2-3-1.500-2 0-3.500 1-3.500s2.500 1.500 1 3.500c1 0 2 1 2 3z" fill="#fbd3b4" stroke="#f7a56c" stroke-width=".5"/></svg>'
  : '<svg class="h-[11px] w-[11px] text-[#f5883d]"><use href="#folder"/></svg>';
document.getElementById('rows').innerHTML = rows.map((r, i) => {
  const h = i % 3 === 1 ? 'h-[15px]' : 'h-[16px]';
  const bg = r.sel ? 'bg-[#cfdef0]' : i % 2 ? 'bg-[#f9f9f9]' : 'bg-white';
  const line = r.sel ? 'border-b-[#cfdef0]' : 'border-b-[#ececec]';
  const t = s => `<td class="border-b ${line} truncate pl-[2px]">${s || ''}</td>`;
  return `<tr class="${h} ${bg}">
    <td colspan="2" class="border-b ${line}"><div class="flex items-center pl-[4px]"><span class="w-[13px] text-[#b5b5b5]">${r.sel ? '' : '<svg class="h-[8px] w-[8px]"><use href="#right"/></svg>'}</span>${icon(r)}<span class="pl-[8px]">${r.n.replace('&', '&amp;')}</span></div></td>
    <td class="border-b ${line} border-l border-l-[#d4d4d4] truncate pl-[2px]">${r.c || ''}</td>${t()}${t(r.l)}
    <td class="border-b ${line}"><input type="checkbox" aria-label="Restrict access: ${r.n.replace('&', '&amp;')}" ${r.on ? 'checked' : ''} ${r.off ? 'disabled' : ''} class="mx-auto flex h-[9px] w-[9px] appearance-none justify-center border border-[#a5a5a5] bg-white disabled:border-[#ddd] checked:after:block checked:after:h-[6px] checked:after:w-[4px] checked:after:rotate-40 checked:after:border-b checked:after:border-r checked:after:border-[#888] checked:after:content-['']"></td>${t(r.u)}
  </tr>`;
}).join('') + '<tr><td colspan="2"></td><td class="border-l border-[#d4d4d4]"></td><td colspan="4"></td></tr>';
</script>
</body>
</html>
